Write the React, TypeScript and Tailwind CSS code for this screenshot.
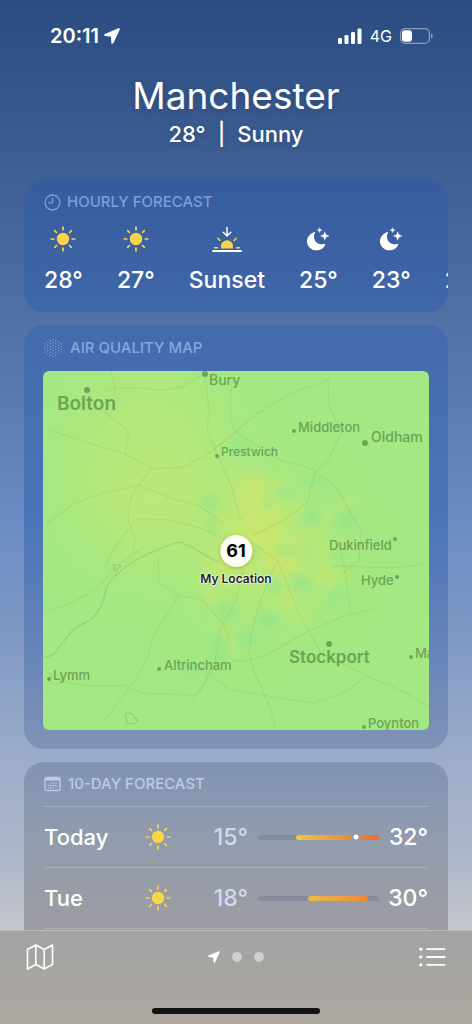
import { useId } from "react";

type Condition = "sun" | "sunset" | "moon";

const hours: { label: string; icon: Condition }[] = [
  { label: "28°", icon: "sun" },
  { label: "27°", icon: "sun" },
  { label: "Sunset", icon: "sunset" },
  { label: "25°", icon: "moon" },
  { label: "23°", icon: "moon" },
  { label: "22°", icon: "moon" },
];

const days = [
  { name: "Today", low: 15, high: 32, from: 31, to: 100, now: 81, fill: "from-[#f2c64b] via-[#e89a3c] to-[#ec6a2e]" },
  { name: "Tue", low: 18, high: 30, from: 41, to: 91, now: null, fill: "from-[#eebb4a] to-[#ea8838]" },
];

// Positions are in map units: the map is 386 wide and 359 high
const MAP_W = 386;
const MAP_H = 359;

const places = [
  { name: "Bury", x: 166, y: 9, dot: [162, 3, 3], size: "text-[14px]" },
  { name: "Bolton", x: 14, y: 32, dot: [44, 19, 3], size: "text-[19px] font-semibold" },
  { name: "Middleton", x: 255, y: 56, dot: [251, 60, 2], size: "text-[13px]" },
  { name: "Oldham", x: 328, y: 66, dot: [322, 72, 3], size: "text-[14px]" },
  { name: "Prestwich", x: 178, y: 81, dot: [174, 85, 2], size: "text-[12px]" },
  { name: "Dukinfield", x: 286, y: 174, dot: [352, 168, 2], size: "text-[13px]" },
  { name: "Hyde", x: 318, y: 209, dot: [354, 206, 2], size: "text-[13px]" },
  { name: "Stockport", x: 246, y: 286, dot: [286, 273, 3], size: "text-[17px] font-semibold" },
  { name: "Altrincham", x: 121, y: 294, dot: [116, 298, 2], size: "text-[13px]" },
  { name: "Lymm", x: 10, y: 304, dot: [6, 308, 2], size: "text-[13px]" },
  { name: "Marple", x: 372, y: 282, dot: [368, 286, 2], size: "text-[13px]" },
  { name: "Poynton", x: 325, y: 352, dot: [321, 356, 2], size: "text-[13px]" },
];

const roads = [
  "M4 58 L38 70 L80 82 L112 98 L140 96 L164 84 L192 62",
  "M4 152 L32 132 L60 122 L95 114 L130 128 L155 134 L180 152",
  "M68 0 C70 12 74 16 72 24",
  "M64 20 C85 10 118 26 142 14 L162 2",
  "M60 40 L86 60 L82 84",
  "M162 4 L166 40 L164 60 L188 114 L198 150",
  "M190 6 C186 30 186 48 192 60 L225 82 C245 96 262 92 272 100",
  "M192 62 C215 40 225 36 245 24 C262 14 270 18 285 8",
  "M285 8 L286 34 L298 62 L286 88 L272 102 L264 132 L240 150 L210 164",
  "M272 102 C290 110 298 122 304 136 L318 160 L316 190 L300 202",
  "M108 98 C92 118 82 130 86 152 L92 166 L90 180",
  "M92 148 C118 146 145 152 165 160 L190 172",
  "M62 196 C72 172 82 164 92 150",
  "M4 240 C36 232 60 216 72 196 L100 176",
  "M115 185 L116 212 L136 224 L158 228 L180 252 L186 268",
  "M136 224 L110 265 L104 288 L90 312 L60 352",
  "M4 302 C28 318 62 316 82 314 L98 322 L150 324 C164 314 165 302 168 296",
  "M190 290 C216 292 236 276 262 262 L298 246 L330 238",
  "M210 172 L235 190 L255 240 L278 282",
  "M232 194 C222 220 210 240 206 280 C210 310 228 326 232 358",
  "M150 290 L170 306 L186 318 L230 326 L270 332 L300 322 L320 308",
  "M278 282 L330 308 L360 320 L384 335",
  "M298 180 L303 206 L308 244",
  "M288 196 C310 192 340 202 385 192",
  "M200 200 L192 232 L178 256 L170 300 L150 330",
];

// Each haze entry is [cx, cy, rx, ry]
const hazeWide = [
  [104, 80, 76, 84], [122, 146, 84, 50], [222, 150, 40, 44], [236, 186, 60, 34], [210, 220, 46, 30],
];

const hazeCore = [
  [216, 148, 20, 24], [222, 176, 26, 14], [242, 192, 20, 14], [206, 118, 14, 14], [186, 190, 18, 12],
];

const streaks = [
  "M210 104 L216 136 L208 160", "M246 112 L232 146 L212 172", "M208 172 L280 164", "M212 180 L264 206 L304 204",
  "M206 168 L176 148", "M196 188 L158 208 L174 232", "M232 196 L252 238 L264 258", "M260 132 L230 160", "M282 150 L310 130",
  "M240 116 L206 112", "M250 180 L310 178", "M280 184 L286 226", "M174 240 L190 282", "M222 240 L262 214", "M196 122 L212 168",
];

const hazeTeal = [
  [195, 76, 10, 7], [167, 131, 8, 8], [168, 154, 6, 5], [242, 122, 9, 7], [268, 146, 8, 7], [302, 148, 12, 10],
  [242, 179, 9, 5], [262, 180, 6, 4], [296, 182, 10, 5], [258, 212, 11, 9], [292, 226, 9, 7], [224, 248, 10, 10],
  [184, 242, 11, 10], [176, 278, 9, 12], [148, 298, 9, 9], [272, 112, 12, 4], [232, 214, 8, 8], [206, 268, 10, 8],
  [222, 133, 4, 4], [214, 182, 5, 6],
];

function LocationArrow({ className }: { className: string }) {
  return (
    <svg viewBox="0 0 16 16" className={className} fill="currentColor" aria-hidden="true">
      <path d="M14.4 0.3L0.9 6C-0.2 6.5 0 8 1.2 8.1L6.2 8.6C6.700 8.7 7 8.900 7 9.400L7.300 14.500C7.400 15.900 9 16.100 9.500 14.900L15.700 1.700C16.100 0.700 15.300 -0.100 14.400 0.300Z" />
    </svg>
  );
}

function SunIcon() {
  return (
    <svg viewBox="0 0 26 26" className="size-[26px]" aria-hidden="true">
      <circle cx="13" cy="13" r="6.200" fill="#f8d548" />
      <g stroke="#f8d548" strokeWidth="1.700" strokeLinecap="round">
        {[0, 45, 90, 135, 180, 225, 270, 315].map((angle) => (
          <path key={angle} d="M13 1.200v2.600" transform={`rotate(${angle} 13 13)`} />
        ))}
      </g>
    </svg>
  );
}

function SunsetIcon() {
  return (
    <svg viewBox="0 0 30 26" className="h-[26px] w-[30px]" fill="none" strokeLinecap="round" aria-hidden="true">
      <path d="M9.100 22.400a6.200 6.200 0 1 1 11.800 0Z" fill="#f8d548" />
      <path d="M2.500 21.700h3M24.500 21.700h3M5.700 12.300l2.200 2.200M24.300 12.300l-2.200 2.200" stroke="#f8d548" strokeWidth="1.600" />
      <path d="M15 1.500v8M11.200 6.200 15 10l3.800-3.800" stroke="#fff" strokeWidth="1.500" strokeLinejoin="round" />
      <path d="M1 25h28" stroke="#fff" strokeWidth="1.800" />
    </svg>
  );
}

function MoonIcon() {
  return (
    <svg viewBox="0 0 26 26" className="my-px size-6" fill="#fff" aria-hidden="true">
      <path d="M9.300 5.300C3.900 7 .9 11.300 1.100 16c.2 5.100 4.600 9.300 10.100 9.300 4.600 0 8.200-2.500 9.600-6.300.2-.7-.3-.9-.8-.700-5.800 2-11.900-2.200-11.300-8.900.1-1.200.5-2.400 1.200-3.400.3-.4-.1-.8-.6-.7Z" />
      <path d="M14.700.8c.4 1.800.8 2.200 2.600 2.600-1.800.4-2.200.8-2.600 2.600-.4-1.800-.8-2.200-2.600-2.600 1.800-.4 2.200-.8 2.600-2.600ZM20.300 5.200c.7 3 1.500 3.800 4.500 4.500-3 .7-3.800 1.500-4.500 4.500-.7-3-1.500-3.800-4.500-4.500 3-.7 3.800-1.500 4.500-4.500Z" stroke="#fff" strokeWidth=".5" strokeLinejoin="round" />
    </svg>
  );
}

function ConditionIcon({ icon }: { icon: Condition }) {
  if (icon === "sun") return <SunIcon />;
  if (icon === "sunset") return <SunsetIcon />;
  return <MoonIcon />;
}

function ClockIcon() {
  return (
    <svg viewBox="0 0 17 17" className="size-[17px]" fill="none" stroke="currentColor" strokeWidth="1.300" strokeLinecap="round" aria-hidden="true">
      <circle cx="8.500" cy="8.500" r="7.500" />
      <path d="M8.500 3.800v5H4.600" />
    </svg>
  );
}

function DotsIcon() {
  const columns = [4, 5, 6, 7, 6, 5, 4];
  return (
    <svg viewBox="0 0 20 20" className="size-5" fill="currentColor" aria-hidden="true">
      {columns.map((count, col) =>
        Array.from({ length: count }, (_, row) => (
          <circle key={`${col}-${row}`} cx={1.9 + col * 2.7} cy={10 + (row - (count - 1) / 2) * 2.9} r=".65" />
        ))
      )}
    </svg>
  );
}

function CalendarIcon() {
  return (
    <svg viewBox="0 0 17 16" className="h-4 w-[17px]" fill="none" aria-hidden="true">
      <rect x=".9" y="1.500" width="15.200" height="13" rx="2" stroke="currentColor" strokeWidth="1.300" />
      <path d="M1 2.800C1 1.800 1.800 1 2.800 1h11.400c1 0 1.800.8 1.800 1.800V4.500H1Z" fill="currentColor" />
      <path d="M6.800 7.200h7M3.800 9.500h10M3.800 11.800h7" stroke="currentColor" strokeWidth="1.300" strokeDasharray="1.300 1" />
    </svg>
  );
}

function StatusBar() {
  return (
    <div className="flex items-center justify-between pt-[22px] pr-[39px] pl-[50px]">
      <div className="flex items-center gap-[5px]">
        <time className="text-[20px] leading-7 font-semibold">20:11</time>
        <LocationArrow className="size-4" />
      </div>
      <div className="flex items-center gap-2">
        <svg viewBox="0 0 24 16" className="h-4 w-6" fill="currentColor" aria-label="Signal">
          <rect x="0" y="10" width="4" height="6" rx="1.200" />
          <rect x="6.500" y="7" width="4" height="9" rx="1.200" />
          <rect x="13" y="4" width="4" height="12" rx="1.200" />
          <rect x="19.500" y="0.500" width="4" height="15.500" rx="1.200" />
        </svg>
        <span className="text-[16px] leading-7">4G</span>
        <svg viewBox="0 0 33 16" className="h-4 w-[33px]" aria-label="Battery">
          <rect x=".6" y=".6" width="28.800" height="14.800" rx="4.500" fill="none" stroke="#fff" strokeOpacity=".45" strokeWidth="1.200" />
          <rect x="2" y="2.200" width="10" height="11.600" rx="3" fill="#fff" />
          <path d="M31 5.500c1 .4 1.700 1.400 1.700 2.500s-.7 2.100-1.700 2.500Z" fill="#fff" fillOpacity=".45" />
        </svg>
      </div>
    </div>
  );
}

function AirQualityMap() {
  const id = useId();
  return (
    <div className="relative mt-[13px] aspect-[386/359] overflow-hidden rounded-md bg-[#a4e883]">
      <svg viewBox={`0 0 ${MAP_W} ${MAP_H}`} className="block h-full w-full" aria-hidden="true">
        <defs>
          <filter id={`${id}-wide`} x="-50%" y="-50%" width="200%" height="200%">
            <feGaussianBlur stdDeviation="28" />
          </filter>
          <filter id={`${id}-core`} x="-50%" y="-50%" width="200%" height="200%">
            <feGaussianBlur stdDeviation="9" />
          </filter>
          <filter id={`${id}-soft`} x="-50%" y="-50%" width="200%" height="200%">
            <feGaussianBlur stdDeviation="4" />
          </filter>
        </defs>
        <g fill="#c6e873" fillOpacity=".5" filter={`url(#${id}-wide)`}>
          {hazeWide.map(([cx, cy, rx, ry]) => (
            <ellipse key={`${cx}-${cy}`} cx={cx} cy={cy} rx={rx} ry={ry} />
          ))}
        </g>
        <g fill="#d1e66a" fillOpacity=".6" filter={`url(#${id}-core)`}>
          {hazeCore.map(([cx, cy, rx, ry]) => (
            <ellipse key={`${cx}-${cy}`} cx={cx} cy={cy} rx={rx} ry={ry} />
          ))}
        </g>
        <g fill="none" stroke="#cbe76e" strokeOpacity=".55" strokeWidth="8" filter={`url(#${id}-soft)`}>
          {streaks.map((d) => (
            <path key={d} d={d} />
          ))}
        </g>
        <g fill="#8fe48c" fillOpacity=".65" filter={`url(#${id}-soft)`}>
          {hazeTeal.map(([cx, cy, rx, ry]) => (
            <ellipse key={`${cx}-${cy}`} cx={cx} cy={cy} rx={rx} ry={ry} />
          ))}
        </g>
        <g fill="none" stroke="#5c9050" strokeOpacity=".13" strokeWidth="1.200" strokeLinejoin="round">
          {roads.map((d) => (
            <path key={d} d={d} />
          ))}
          <path d="M0 287c14-2 18-14 28-26 10-10 24-10 30-26 6-12 2-20 14-30 12-12 32-24 64-34 16 4 24 14 40 20" strokeOpacity=".25" />
          <path d="m82 343 6-1 7 8-4 3-7-1ZM70 193l8 2-6 5Z" strokeOpacity=".3" />
        </g>
        <g fill="#6ca456">
          {places.map(({ name, dot: [cx, cy, r] }) => (
            <circle key={name} cx={cx} cy={cy} r={r} />
          ))}
        </g>
      </svg>
      {places.map(({ name, x, y, size }) => (
        <span
          key={name}
          className={`absolute -translate-y-1/2 leading-none font-medium whitespace-nowrap text-[#6ca456] ${size}`}
          style={{ left: `${(x / MAP_W) * 100}%`, top: `${(y / MAP_H) * 100}%` }}
        >
          {name}
        </span>
      ))}
      <div className="absolute top-1/2 left-1/2 flex -translate-x-1/2 -translate-y-1/2 flex-col items-center gap-1 pt-5">
        <span className="flex size-8 items-center justify-center rounded-full bg-[#fbfdf5] text-[18px] font-bold text-black shadow-[0_1px_4px_#a9b84a]">
          61
        </span>
        <span className="text-[12px] leading-4 font-semibold whitespace-nowrap text-[#20241c] [text-shadow:0_0_2px_#fff,0_0_2px_#fff,0_0_2px_#fff]">
          My Location
        </span>
      </div>
    </div>
  );
}

function DayRow({ name, low, high, from, to, now, fill }: (typeof days)[number]) {
  return (
    <li className="grid h-[61px] grid-cols-[84px_60px_60px_1fr_39px] items-center border-t border-white/20 text-[23px]">
      <span className="font-medium text-[22px]">{name}</span>
      <span className="flex justify-center">
        <SunIcon />
      </span>
      <span className="text-right font-medium text-[#d0daec]">{low}°</span>
      <span className="relative mx-[10px] h-[5px] rounded-full bg-[#5f6b80]/30">
        <span
          className={`absolute inset-y-0 rounded-full bg-linear-to-r ${fill}`}
          style={{ left: `${from}%`, right: `${100 - to}%` }}
        />
        {now !== null && (
          <span
            className="absolute top-1/2 size-[9px] -translate-x-1/2 -translate-y-1/2 rounded-full border-2 border-[#8e99aa] bg-white"
            style={{ left: `${now}%` }}
          />
        )}
      </span>
      <span className="flex justify-end font-medium">{high}°</span>
    </li>
  );
}

export default function App() {
  return (
    <div className="flex h-screen flex-col overflow-hidden bg-[linear-gradient(to_bottom,#2b4c81_0px,#3d5e93_160px,#5576aa_360px,#6a8cc2_520px,#8099c4_640px,#9bacca_750px,#acb6c9_850px,#c5c6cc_930px)] font-[Inter,sans-serif] text-white">
      <StatusBar />
      <header className="pt-[22px] text-center [text-shadow:0_2px_6px_rgba(0,0,0,0.2)]">
        <h1 className="text-[37px] leading-12">Manchester</h1>
        <p className="flex justify-center gap-3 text-[22px] leading-7 font-medium">
          <span>28°</span>
          <span>|</span>
          <span>Sunny</span>
        </p>
      </header>

      <main className="mt-8 flex min-h-0 flex-1 flex-col gap-[13px] overflow-hidden px-6">
        <section className="shrink-0 overflow-hidden rounded-[20px] bg-linear-to-b from-[#365c9d] to-[#4067a9] pt-3 pb-4">
          <h2 className="flex items-center gap-[6px] px-5 text-[15px] leading-5 font-medium text-[#7f9fd8]">
            <ClockIcon />
            HOURLY FORECAST
          </h2>
          <ul className="mt-[14px] flex gap-[34px] overflow-hidden px-5">
            {hours.map(({ label, icon }) => (
              <li key={label} className="flex shrink-0 flex-col items-center gap-3">
                <ConditionIcon icon={icon} />
                <span className="text-[23px] leading-8 font-medium">{label}</span>
              </li>
            ))}
          </ul>
        </section>

        <section className="shrink-0 rounded-[20px] bg-[linear-gradient(to_bottom,#446aac_0%,#4b74b8_45%,#6583b9_75%,#7f93b5_100%)] px-[19px] pt-[13px] pb-[19px]">
          <h2 className="flex items-center gap-[7px] text-[15px] leading-5 font-medium text-[#86a8df]">
            <DotsIcon />
            AIR QUALITY MAP
          </h2>
          <AirQualityMap />
        </section>

        <section className="shrink-0 grow rounded-t-[20px] bg-linear-to-b from-[#8294b3] via-[#929cac] to-[#9d9ca3] px-5 pt-3">
          <h2 className="mb-3 flex items-center gap-[7px] text-[15px] leading-5 font-medium text-[#bccbe6]">
            <CalendarIcon />
            10-DAY FORECAST
          </h2>
          <ul className="border-b border-white/20">
            {days.map((day) => (
              <DayRow key={day.name} {...day} />
            ))}
          </ul>
        </section>
      </main>

      <footer className="shrink-0 border-t border-white/20 bg-linear-to-b from-[#a3a3a5] to-[#ada9a0]">
        <div className="flex items-center justify-between px-[26px] pt-3">
          <button type="button" aria-label="Map">
            <svg viewBox="0 0 28 28" className="size-7" fill="none" stroke="#fff" strokeWidth="1.600" strokeLinejoin="round" aria-hidden="true">
              <path d="M1.500 6.500 9.800 2l8.400 4.500L26.500 2v19.500L18.200 26l-8.400-4.500L1.500 26ZM9.800 2v19.500M18.200 6.500V26" />
            </svg>
          </button>
          <div className="flex items-center gap-3">
            <LocationArrow className="size-3" />
            <span className="size-[10px] rounded-full bg-[#cfcfcf]" />
            <span className="size-[10px] rounded-full bg-[#cfcfcf]" />
          </div>
          <button type="button" aria-label="Locations">
            <svg viewBox="0 0 28 28" className="size-7" fill="none" stroke="#fff" strokeLinecap="round" aria-hidden="true">
              <path d="M9 6.200h17.500M9 14h17.500M9 21.800h17.500" strokeWidth="1.800" />
              <path d="M2.800 6.200h.01M2.800 14h.01M2.800 21.800h.01" strokeWidth="3.200" />
            </svg>
          </button>
        </div>
        <div className="mx-auto mt-[37px] mb-[10px] h-[6px] w-[168px] rounded-full bg-[#121212]" />
      </footer>
    </div>
  );
}
